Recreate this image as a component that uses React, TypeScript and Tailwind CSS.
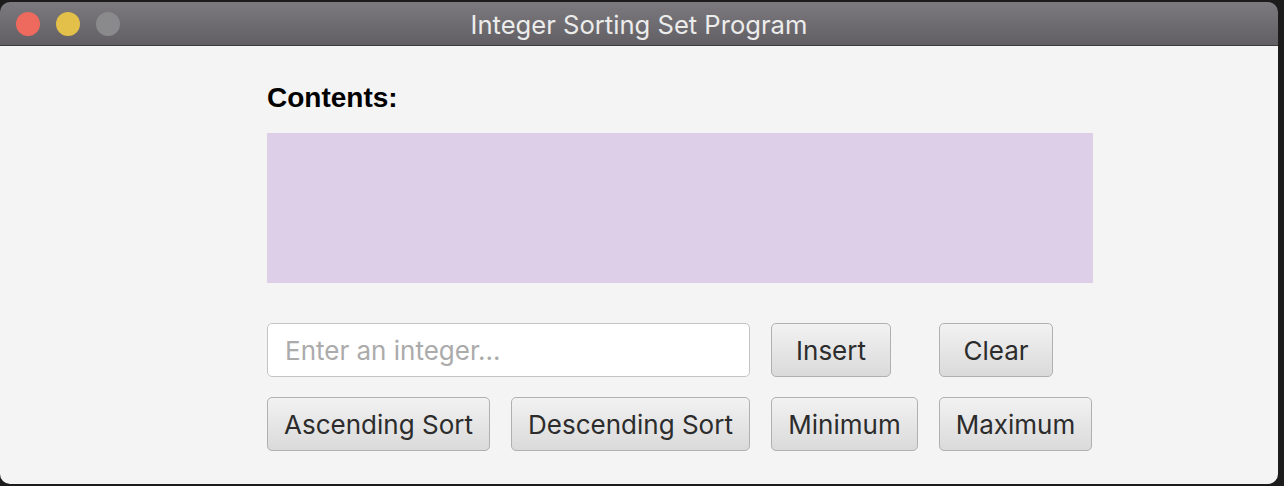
import React from "react";

const SYS = "font-['Inter','Noto_Sans',sans-serif]";

function Btn({ label, className = "" }: { label: string; className?: string }) {
  return (
    <button
      className={`h-[54px] rounded-[5px] border-[1.5px] border-[#b0b0b0] bg-gradient-to-b from-[#f2f2f2] to-[#dadada] text-[26px] text-[#2c2c2c] ${SYS} ${className}`}
    >
      {label}
    </button>
  );
}

export default function App() {
  return (
    <div className="w-[1284px] h-[486px] bg-[#1c1c1c] overflow-hidden">
      <div className="mt-[2px] w-[1278px] h-[482px] rounded-[10px] overflow-hidden flex flex-col">
        {/* Title bar */}
        <div className="relative h-[44px] shrink-0 bg-gradient-to-b from-[#7c7a7e] to-[#615f63] border-b border-[#3c3b3d] flex items-center justify-center pt-[3px]">
          <div className="absolute left-[16px] top-[10px] flex gap-[16px]">
            <span className="w-[24px] h-[24px] rounded-full bg-[#ee6a5e]" />
            <span className="w-[24px] h-[24px] rounded-full bg-[#e2c04a]" />
            <span className="w-[24px] h-[24px] rounded-full bg-[#8a898c]" />
          </div>
          <span className={`text-[25.6px] text-[#ececec] ${SYS}`}>Integer Sorting Set Program</span>
        </div>

        {/* Content */}
        <div className="flex-1 bg-[#f4f4f4] pl-[267px] pt-[35px]">
          <h1 className="text-[28px] leading-[34px] font-bold text-black font-['Liberation_Sans',Arial,sans-serif]">
            Contents:
          </h1>
          <div className="mt-[18px] w-[826px] h-[150px] bg-[#ddcfe8]" />

          <div className="mt-[40px] grid grid-cols-[223px_239px_147px_153px] gap-x-[21px] gap-y-[20px] items-start">
            <input
              placeholder="Enter an integer..."
              className={`col-span-2 h-[54px] rounded-[5px] border-[1.5px] border-[#c4c4c4] bg-white px-[17px] text-[26px] text-[#333] placeholder:text-[#ababab] outline-none ${SYS}`}
            />
            <Btn label="Insert" className="w-[120px]" />
            <Btn label="Clear" className="w-[114px]" />
            <Btn label="Ascending Sort" />
            <Btn label="Descending Sort" />
            <Btn label="Minimum" />
            <Btn label="Maximum" />
          </div>
        </div>
      </div>
    </div>
  );
}
